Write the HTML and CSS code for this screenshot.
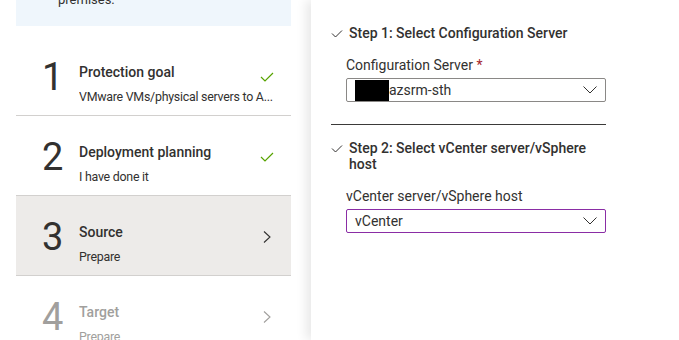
FILE: index.html
```html
<html>

<head>
    <link rel="stylesheet" href="styles.css">
</head>
<body>
    <div class="page">
        <div class="wizard">
            <div class="info-box">premises.</div>
            <div class="step done">
                <div class="step-number">1</div>
                <div class="step-text">
                    <div class="step-title-row">
                        <div class="step-title">Protection goal</div>
                        <div class="step-icon">
                            <svg width="14" height="10" viewBox="0 0 14 10"><path d="M1 5 L5 9 L13 1" fill="none" stroke="#57a300" stroke-width="1.2"/></svg>
                        </div>
                    </div>
                    <div class="step-sub">VMware VMs/physical servers to A...</div>
                </div>
            </div>
            <div class="step done">
                <div class="step-number">2</div>
                <div class="step-text">
                    <div class="step-title-row">
                        <div class="step-title">Deployment planning</div>
                        <div class="step-icon">
                            <svg width="14" height="10" viewBox="0 0 14 10"><path d="M1 5 L5 9 L13 1" fill="none" stroke="#57a300" stroke-width="1.2"/></svg>
                        </div>
                    </div>
                    <div class="step-sub">I have done it</div>
                </div>
            </div>
            <div class="step current">
                <div class="step-number">3</div>
                <div class="step-text">
                    <div class="step-title-row">
                        <div class="step-title">Source</div>
                        <div class="step-icon">
                            <svg width="8" height="12" viewBox="0 0 8 12"><path d="M1 0.5 L7 6 L1 11.5" fill="none" stroke="#323130" stroke-width="1.1"/></svg>
                        </div>
                    </div>
                    <div class="step-sub">Prepare</div>
                </div>
            </div>
            <div class="step disabled">
                <div class="step-number">4</div>
                <div class="step-text">
                    <div class="step-title-row">
                        <div class="step-title">Target</div>
                        <div class="step-icon">
                            <svg width="8" height="12" viewBox="0 0 8 12"><path d="M1 0.5 L7 6 L1 11.5" fill="none" stroke="#a19f9d" stroke-width="1.1"/></svg>
                        </div>
                    </div>
                    <div class="step-sub">Prepare</div>
                </div>
            </div>
        </div>

        <div class="blade">
            <div class="section">
                <div class="section-head">
                    <svg class="section-check" width="12" height="8" viewBox="0 0 12 8"><path d="M1 3.5 L4.5 7 L11 0.5" fill="none" stroke="#323130" stroke-width="1"/></svg>
                    <div class="section-title">Step 1: Select Configuration Server</div>
                </div>
                <div class="field-label">Configuration Server <span class="required">*</span></div>
                <div class="dropdown">
                    <span class="redacted"></span><span class="dropdown-value">azsrm-sth</span>
                    <svg class="dropdown-caret" width="14" height="8" viewBox="0 0 14 8"><path d="M0.5 0.5 L7 7 L13.5 0.5" fill="none" stroke="#323130" stroke-width="1"/></svg>
                </div>
            </div>

            <div class="divider"></div>

            <div class="section">
                <div class="section-head">
                    <svg class="section-check" width="12" height="8" viewBox="0 0 12 8"><path d="M1 3.5 L4.5 7 L11 0.5" fill="none" stroke="#323130" stroke-width="1"/></svg>
                    <div class="section-title">Step 2: Select vCenter server/vSphere host</div>
                </div>
                <div class="field-label">vCenter server/vSphere host</div>
                <div class="dropdown focused">
                    <span class="dropdown-value">vCenter</span>
                    <svg class="dropdown-caret" width="14" height="8" viewBox="0 0 14 8"><path d="M0.5 0.5 L7 7 L13.5 0.5" fill="none" stroke="#323130" stroke-width="1"/></svg>
                </div>
            </div>
        </div>
    </div>
</body>

</html>
```

FILE: styles.css
```css
body {
    margin: 0;
    background-color: white;
    color: #323130;
    font-family: "Segoe UI", Roboto, sans-serif;
    overflow: hidden;
}

.page {
    display: flex;
    width: 679px;
    height: 340px;
    overflow: hidden;
}

.wizard {
    width: 275px;
    padding-left: 16px;
    padding-right: 20px;
    flex-shrink: 0;
}

.info-box {
    background-color: #eff6fc;
    margin-top: -10px;
    padding: 0 0 16px 42px;
    font-size: 13px;
    line-height: 20px;
}

.step {
    display: flex;
    align-items: flex-start;
    height: 80px;
    box-sizing: border-box;
    padding: 21px 16px 0 26px;
    border-bottom: 1px solid #d2d0ce;
}

.info-box + .step {
    margin-top: 10px;
}

.step.current {
    background-color: #edebe9;
}

.step-number {
    width: 37px;
    font-size: 38px;
    line-height: 40px;
}

.step-text {
    flex: 1;
    margin-top: 5px;
    min-width: 0;
}

.step-title-row {
    display: flex;
    align-items: flex-start;
}

.step-title {
    flex: 1;
    font-size: 14px;
    font-weight: 500;
    line-height: 20px;
}

.step-icon {
    width: 16px;
    height: 16px;
    margin-top: 7px;
    display: flex;
    align-items: center;
    justify-content: center;
}

.step-sub {
    margin-top: 2px;
    font-size: 12.4px;
    letter-spacing: -0.25px;
    line-height: 20px;
    white-space: nowrap;
    overflow: hidden;
}

.step.disabled {
    color: #a19f9d;
}

.blade {
    flex: 1;
    background-color: white;
    box-shadow: -5px 0 10px rgba(0, 0, 0, 0.09);
    padding: 25px 0 0 20px;
}

.section {
    width: 275px;
}

.section-head {
    display: flex;
    align-items: flex-start;
}

.section-check {
    margin-top: 5px;
    margin-right: 6px;
    flex-shrink: 0;
}

.section-title {
    font-size: 14px;
    font-weight: 500;
    line-height: 16px;
    width: 245px;
}

.field-label {
    margin-top: 14px;
    margin-left: 15px;
    font-size: 14px;
    line-height: 20px;
}

.field-label + .dropdown {
    margin-top: 3px;
}

.required {
    color: #a4262c;
}

.dropdown {
    display: flex;
    align-items: center;
    margin-left: 15px;
    width: 260px;
    height: 24px;
    box-sizing: border-box;
    border: 1px solid #8a8886;
    border-radius: 2px;
    padding: 0 8px;
    font-size: 14px;
}

.dropdown.focused {
    border-color: #8a2da5;
}

.redacted {
    display: inline-block;
    width: 34px;
    height: 21px;
    background-color: black;
}

.dropdown-value {
    flex: 1;
}

.divider {
    width: 275px;
    height: 1px;
    margin-top: 22px;
    margin-bottom: 15px;
    background-color: #3b3a39;
}
```
